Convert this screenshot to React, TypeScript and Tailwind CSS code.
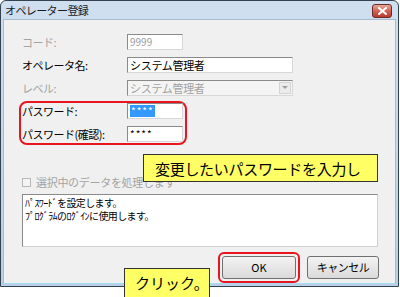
export default function App() {
  const font = "font-['Noto_Sans_CJK_JP','Noto_Sans_CJK_SC',sans-serif]";
  const sunken =
    "h-[16px] border border-t-[#8a8a8a] border-l-[#8a8a8a] border-r-[#d8d8d8] border-b-[#d8d8d8] flex items-center pl-[2px] leading-none";

  return (
    <div className={`relative w-[400px] h-[297px] bg-white overflow-hidden ${font}`}>
      {/* window */}
      <div className="w-[399px] h-[287px] border border-[#34414e] rounded-t-[6px] bg-gradient-to-b from-[#cfdff0] to-[#b9cfe7] flex flex-col">
        <div className="h-[19px] flex items-center justify-between pl-[4px] pr-[6px]">
          <span className="text-[11px] tracking-[-0.6px] text-[#1b1b1b] leading-none">オペレーター登録</span>
          <div className="w-[20px] h-[14px] mt-[2px] rounded-[3px] border border-[#6b2a24] bg-gradient-to-b from-[#e9a89c] via-[#d06354] to-[#b83a2c] flex items-center justify-center">
            <svg width="9" height="8" viewBox="0 0 9 8">
              <path d="M1 1 L8 7 M8 1 L1 7" stroke="#fff" strokeWidth="2" strokeLinecap="square" />
            </svg>
          </div>
        </div>
        <div className="flex-1 mx-[2px] mb-[2px] border border-[#a9bccf] border-b-[#a5dcf0] bg-[#f0f0f0] pl-[18px] pr-[17px] pt-[14px] text-[11px] flex flex-col">
          {/* code */}
          <div className="flex items-center h-[16px]">
            <span className="w-[105px] text-[#a3a3a3] tracking-[-0.5px]">コード:</span>
            <div className={`${sunken} w-[56px] bg-white text-[10px] text-[#9a9a9a]`}>9999</div>
          </div>
          {/* name */}
          <div className="flex items-center h-[16px] mt-[7px]">
            <span className="w-[105px] text-black tracking-[-0.5px]">オペレータ名:</span>
            <div className={`${sunken} w-[166px] bg-white text-black tracking-[-0.3px]`}>システム管理者</div>
          </div>
          {/* level */}
          <div className="flex items-center h-[16px] mt-[7px]">
            <span className="w-[105px] text-[#a3a3a3] tracking-[-0.5px]">レベル:</span>
            <div className={`${sunken} w-[166px] bg-[#f4f4f4] text-[#a3a3a3] tracking-[-0.3px] justify-between pr-[1px]`}>
              <span>システム管理者</span>
              <div className="w-[12px] h-[12px] border border-[#d4d4d4] bg-[#ececec] flex items-center justify-center">
                <svg width="6" height="4" viewBox="0 0 6 4">
                  <path d="M0 0 L6 0 L3 3 Z" fill="#a0a0a0" />
                </svg>
              </div>
            </div>
          </div>
          {/* password group */}
          <div className="mt-[5px] -ml-[3px] w-[168px] border-2 border-[#e8141e] rounded-[8px] pl-[1px] pb-[1px] flex flex-col">
            <div className="flex items-center h-[16px]">
              <span className="w-[105px] text-black tracking-[-0.5px]">パスワード:</span>
              <div className={`${sunken} w-[56px] bg-white`}>
                <span className="bg-[#3399ff] text-white text-[10px] tracking-[1px] px-[1px] leading-[12px]">****</span>
              </div>
            </div>
            <div className="flex items-center h-[16px] mt-[7px]">
              <span className="w-[105px] text-black tracking-[-0.5px]">パスワード(確認):</span>
              <div className={`${sunken} w-[56px] bg-white text-[10px] tracking-[1px] text-black`}>****</div>
            </div>
          </div>
          {/* checkbox */}
          <div className="flex items-center h-[12px] mt-[31px]">
            <div className="w-[9px] h-[9px] border border-[#b8b8b8] bg-[#f4f4f4]" />
            <span className="ml-[5px] text-[#a3a3a3] tracking-[-0.3px]">選択中のデータを処理します</span>
          </div>
          {/* memo */}
          <div className="mt-[6px] h-[53px] border border-t-[#8a8a8a] border-l-[#8a8a8a] border-r-[#d0d0d0] border-b-[#d0d0d0] bg-white px-[2px] pt-[1px] text-[10px] leading-[13px] text-black tracking-[-0.6px]">
            <div>ﾊﾟｽﾜｰﾄﾞを設定します。</div>
            <div>ﾌﾟﾛｸﾞﾗﾑのﾛｸﾞｲﾝに使用します。</div>
          </div>
          {/* buttons */}
          <div className="mt-[5px] flex justify-end items-center gap-[7px] -mr-[1px]">
            <div className="border-2 border-[#e8141e] rounded-[6px] p-[2px]">
              <button className="w-[74px] h-[23px] rounded-[3px] border border-[#707070] bg-gradient-to-b from-[#f3f3f3] to-[#dadada] text-[11px] text-black leading-none">
                OK
              </button>
            </div>
            <button className="w-[72px] h-[23px] rounded-[3px] border border-[#707070] bg-gradient-to-b from-[#f3f3f3] to-[#dadada] text-[11px] text-black leading-none tracking-[-0.5px]">
              キャンセル
            </button>
          </div>
        </div>
      </div>

      {/* annotation callouts */}
      <div className="absolute left-[143px] top-[154px] w-[235px] h-[28px] bg-[#ffff66] border border-[#333] flex items-center pl-[11px] text-[15px] text-black leading-none tracking-[-0.3px]">
        変更したいパスワードを入力し
      </div>
      <div className="absolute left-[124px] top-[268px] w-[86px] h-[32px] bg-[#ffff66] border border-[#333] flex items-start pt-[6px] pl-[10px] text-[15px] text-black leading-none">
        クリック。
      </div>
    </div>
  );
}
